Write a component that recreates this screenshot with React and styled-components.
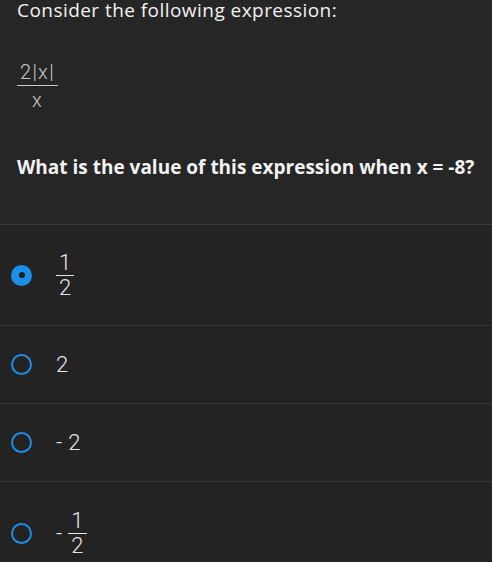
import React from "react";
import styled, { createGlobalStyle } from "styled-components";

const GlobalStyle = createGlobalStyle`
  html, body {
    margin: 0;
    padding: 0;
    background: #232323;
  }
  * { box-sizing: border-box; }
`;

const Page = styled.div`
  width: 492px;
  height: 562px;
  overflow: hidden;
  background: #232323;
  font-family: "Open Sans", "Liberation Sans", sans-serif;
`;

const Prompt = styled.div`
  background: #262626;
  padding: 0 17px;
  height: 225px;
  border-bottom: 1px solid #383838;
  display: flex;
  flex-direction: column;
`;

const Lead = styled.div`
  color: #f2f2f2;
  font-size: 19px;
  letter-spacing: 0.45px;
  line-height: 22px;
  margin-top: -1px;
  white-space: nowrap;
`;

const Expression = styled.div`
  margin-top: 41px;
  display: flex;
`;

const Question = styled.div`
  margin-top: 46px;
  color: #f2f2f2;
  font-weight: 700;
  font-size: 19px;
  line-height: 22px;
  white-space: nowrap;
`;

const Frac = styled.span`
  display: inline-flex;
  flex-direction: column;
  align-items: center;
  font-family: Roboto, "Noto Sans", sans-serif;
  font-weight: 300;
  color: ${(p) => p.$color || "#c8c8c8"};
  font-size: ${(p) => p.$size || 20}px;
  letter-spacing: ${(p) => p.$spacing || 0}px;
  line-height: 1;
`;

const Num = styled.span`
  padding: 0 ${(p) => p.$pad || 3}px ${(p) => p.$gap || 2}px;
  border-bottom: 1.5px solid currentColor;
`;

const Den = styled.span`
  padding-top: ${(p) => p.$gap || 2}px;
`;

const Options = styled.div`
  display: flex;
  flex-direction: column;
`;

const Row = styled.label`
  display: flex;
  align-items: center;
  flex-shrink: 0;
  height: ${(p) => p.$h}px;
  padding-left: 11px;
  border-bottom: ${(p) => (p.$last ? "none" : "1px solid #363636")};
  cursor: pointer;
`;

const Radio = styled.span`
  width: 21px;
  height: 21px;
  border-radius: 50%;
  border: 2.75px solid #1b8fe8;
  background: ${(p) => (p.$checked ? "#1b8fe8" : "transparent")};
  display: flex;
  align-items: center;
  justify-content: center;
  flex-shrink: 0;
  &::after {
    content: "";
    display: ${(p) => (p.$checked ? "block" : "none")};
    width: 6px;
    height: 6px;
    border-radius: 50%;
    background: #1d1d1d;
  }
`;

const Answer = styled.span`
  margin-left: 24px;
  display: flex;
  align-items: center;
  color: #e6e6e6;
  font-family: Roboto, "Noto Sans", sans-serif;
  font-weight: 300;
  font-size: 22px;
`;

const Minus = styled.span`
  margin-right: 6px;
`;

const Half = () => (
  <Frac $size={22} $color="#e6e6e6">
    <Num $pad={3} $gap={1}>1</Num>
    <Den $gap={1}>2</Den>
  </Frac>
);

const options = [
  { h: 101, checked: true, content: <Half /> },
  { h: 78, content: "2" },
  { h: 78, content: <><Minus>-</Minus>2</> },
  { h: 102, last: true, content: <><Minus>-</Minus><Half /></> },
];

export default function App() {
  return (
    <Page>
      <GlobalStyle />
      <Prompt>
        <Lead>Consider the following expression:</Lead>
        <Expression>
          <Frac $spacing={1.3}>
            <Num $pad={3} $gap={3}>2|x|</Num>
            <Den $gap={4}>x</Den>
          </Frac>
        </Expression>
        <Question>What is the value of this expression when x = -8?</Question>
      </Prompt>
      <Options>
        {options.map((o, i) => (
          <Row key={i} $h={o.h} $last={o.last}>
            <Radio $checked={o.checked} />
            <Answer>{o.content}</Answer>
          </Row>
        ))}
      </Options>
    </Page>
  );
}
